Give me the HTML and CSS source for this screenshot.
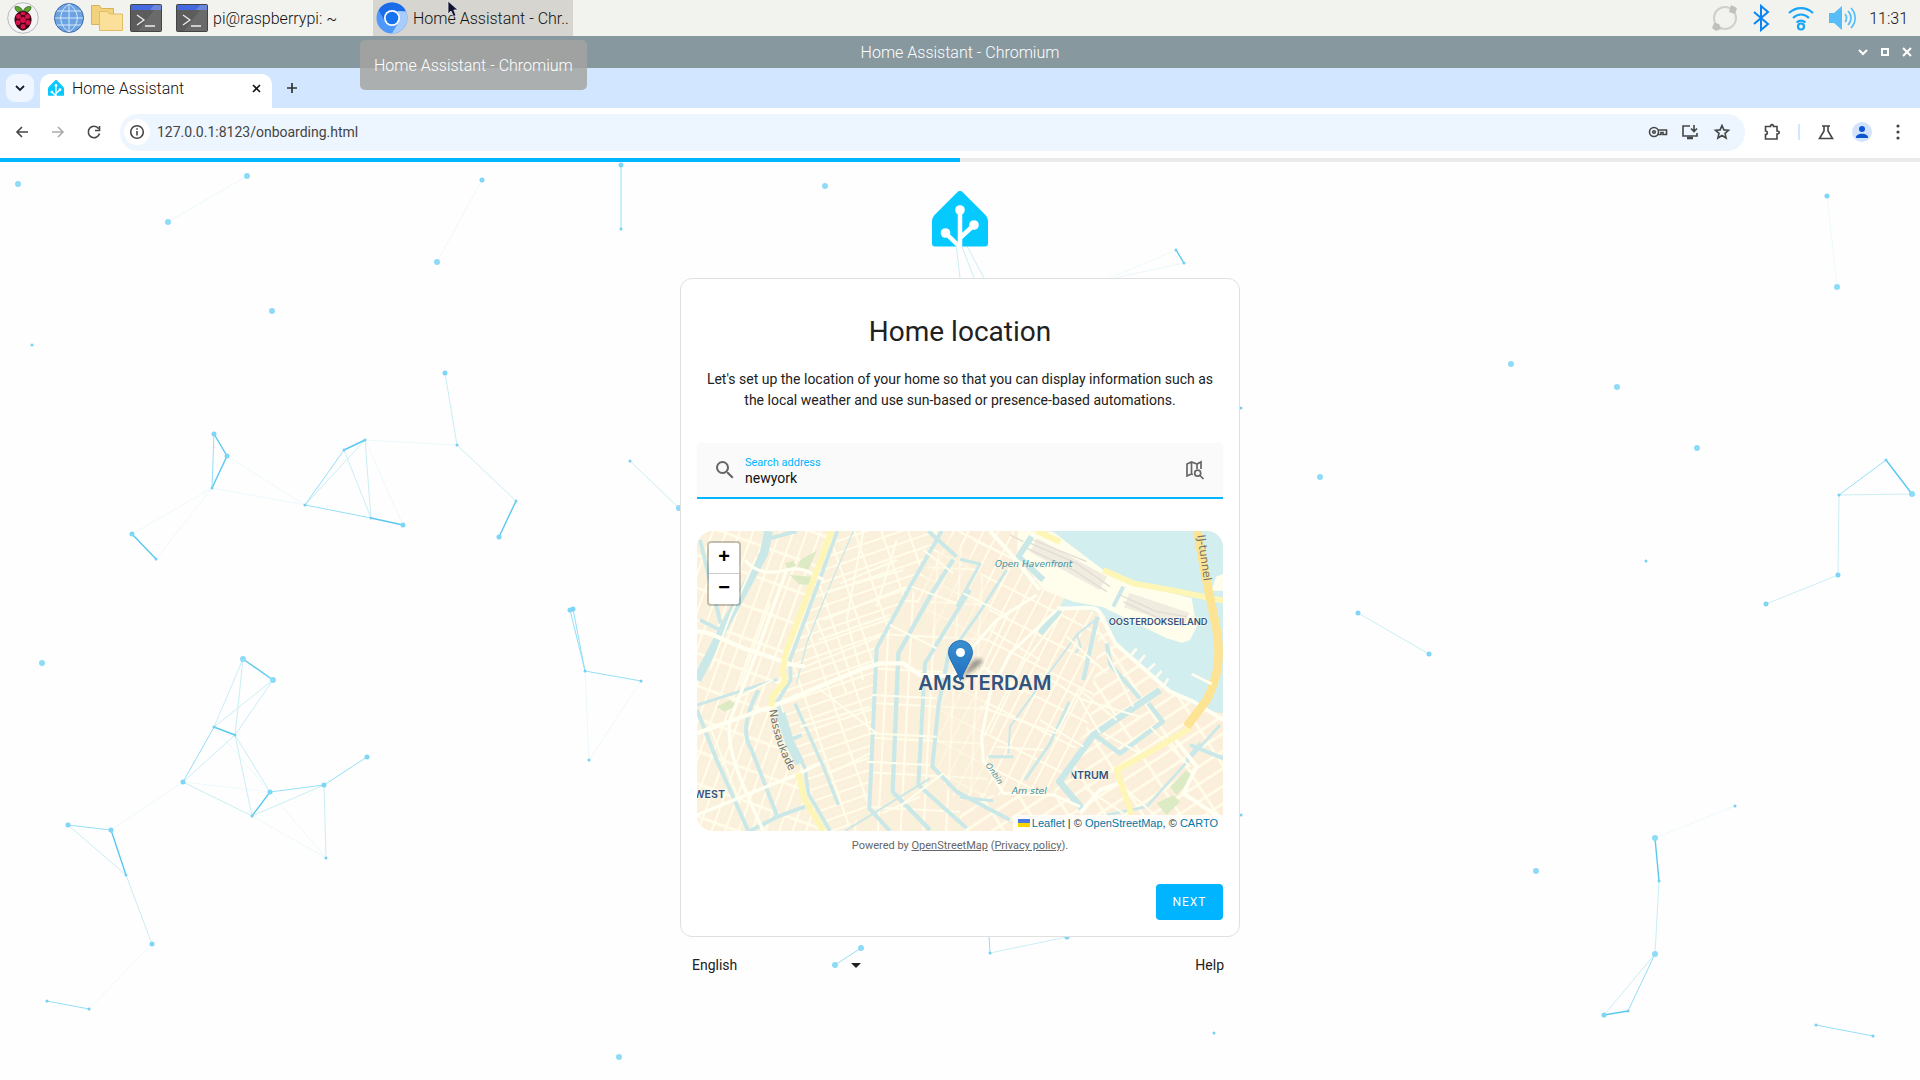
FILE: index.html
```html
<!DOCTYPE html>
<html lang="en">
<head>
<meta charset="utf-8">
<title>Home Assistant</title>
<link rel="stylesheet" href="styles.css">
</head>
<body>
<svg class="defs" width="0" height="0" aria-hidden="true">
  <symbol id="ha-logo" viewBox="0 0 56 56">
    <path fill="#06caff" d="M28 0c1 0 2 .5 2.700 1.200L53 23.500c1.900 1.900 3 4.500 3 6.500v22.500a3 3 0 0 1-3 3H3a3 3 0 0 1-3-3V30c0-2 1.100-4.600 3-6.500L25.300 1.200C26 .5 27 0 28 0z"/>
    <g fill="none" stroke="#fff" stroke-width="4.500"><path d="M28 56V19M28 56L13.500 42M28 47L42 34"/></g>
    <g fill="#fff"><circle cx="28" cy="19" r="4.800"/><circle cx="13.500" cy="42" r="4.800"/><circle cx="42" cy="34" r="4.800"/></g>
  </symbol>
  <symbol id="terminal" viewBox="0 0 32 28">
    <rect x=".5" y=".5" width="31" height="27" rx="1" fill="#5c5c5c" stroke="#444"/>
    <path d="M24 6H31V27H8z" fill="#6a6a6a"/>
    <path d="M1 1H31V6H1z" fill="#4468e0"/><path d="M24 1h7v5H20z" fill="#6d86dc"/>
    <path d="M7 11l7 5-7 5M15 22h10" fill="none" stroke="#eee" stroke-width="1.300"/>
  </symbol>
</svg>

<header class="taskbar">
  <div class="launchers">
    <button class="tb-btn" aria-label="Menu">
      <svg width="32" height="32" viewBox="0 0 32 32"><circle cx="16" cy="16" r="15.300" fill="#f4f4f6" stroke="#b9b9bd"/><path d="M15.500 9C14 4 9 4 8 5c0 4 3 6 7.500 4zM16.500 9C18 4 23 4 24 5c0 4-3 6-7.500 4z" fill="#5aa82c" stroke="#234b10" stroke-width=".7"/><path d="M16 9c5 0 9 4 8.500 9.500C24 24 20 28 16 28.500 12 28 8 24 7.500 18.500 7 13 11 9 16 9z" fill="#3c0414"/><g fill="#d3134a"><circle cx="16" cy="18" r="2.900"/><circle cx="11.500" cy="14.500" r="2.500"/><circle cx="20.500" cy="14.500" r="2.500"/><ellipse cx="16" cy="11.500" rx="2.600" ry="1.700"/><circle cx="11" cy="20.500" r="2.500"/><circle cx="21" cy="20.500" r="2.500"/><circle cx="16" cy="24.500" r="2.500"/></g></svg>
    </button>
    <button class="tb-btn" aria-label="Web browser">
      <svg width="30" height="30" viewBox="0 0 30 30"><circle cx="15" cy="15" r="14.500" fill="#6ba2e2" stroke="#3d6aa5"/><path d="M15 1v28M1 15h28M3 8h24M3 22h24M15 1C4 8 4 22 15 29M15 1c11 7 11 21 0 28" fill="none" stroke="#d7e9fb"/></svg>
    </button>
    <button class="tb-btn" aria-label="File manager">
      <svg width="32" height="26" viewBox="0 0 32 26"><path d="M.5 .5h8l2 3h12v16H.5z" fill="#f2d27c" stroke="#d9b45c"/><path d="M8.500 6.500h8l2 2.500h13v16.500h-23z" fill="#fbe09a" stroke="#e0bd66"/></svg>
    </button>
    <button class="tb-btn" aria-label="Terminal"><svg width="32" height="28"><use href="#terminal"/></svg></button>
  </div>
  <button class="task task-term"><svg width="32" height="28"><use href="#terminal"/></svg><span>pi@raspberrypi: ~</span></button>
  <button class="task task-active">
    <svg width="32" height="32" viewBox="0 0 32 32"><circle cx="16" cy="16" r="15.500" fill="#4f98fb"/><path d="M2.500 8.300A15.500 15.500 0 0 1 30 9.500L16 8.500 9 19z" fill="#1a6be8"/><path d="M30 9.500A15.500 15.500 0 0 1 16 31.500L23 19.500 22 9z" fill="#a9cdfb"/><circle cx="16" cy="16" r="8" fill="#fff"/><circle cx="16" cy="16" r="6.300" fill="#1673f0"/></svg>
    <span>Home Assistant - Chr..</span>
    <span class="tooltip" role="tooltip">Home Assistant - Chromium</span>
    <svg class="cursor" width="12" height="18" viewBox="0 0 12 18"><path d="M1 1v13l3-3 2.500 5.500 2.500-1L6.800 10H11z" fill="#101030" stroke="#e8e8ee" stroke-width=".8"/></svg>
  </button>
  <div class="tray">
    <svg width="28" height="28" viewBox="0 0 28 28"><circle cx="14" cy="14" r="11" fill="none" stroke="#cfcfcd" stroke-width="2"/><path d="M20 1l6 3-2 6-6-2zM3 19l5 1 2 5-5 2-4-3z" fill="#bfbfbd"/></svg>
    <svg class="bluetooth" width="18" height="28" viewBox="0 0 18 28"><path d="M2 8l14 12-7 6V2l7 6L2 20" fill="none" stroke="#0a84f5" stroke-width="2"/></svg>
    <svg width="28" height="28" viewBox="0 0 28 28"><g fill="none" stroke="#19a5f7" stroke-width="2.200"><path d="M2 9c7-6.500 17-6.500 24 0M6 14c5-4.500 11-4.500 16 0M9.500 18.500c3-2.500 6-2.500 9 0"/><circle cx="14" cy="22.500" r="3"/></g></svg>
    <svg width="28" height="28" viewBox="0 0 28 28"><path d="M1 9h5l8-7v24l-8-7H1z" fill="#55bdf8"/><path d="M17 10c2 2 2 6 0 8M20 7c4 4 4 10 0 14M23 4c5.500 6 5.500 14 0 20" fill="none" stroke="#55bdf8" stroke-width="1.700"/></svg>
    <time class="clock">11:31</time>
  </div>
</header>

<div class="titlebar">
  <span></span>
  <span class="window-title">Home Assistant - Chromium</span>
  <div class="window-controls">
    <button aria-label="Minimize"><svg width="10" height="10" viewBox="0 0 10 10"><path d="M1 3l4 4 4-4"/></svg></button>
    <button aria-label="Maximize"><svg width="10" height="10" viewBox="0 0 10 10"><path d="M2 2h6v6H2z"/></svg></button>
    <button aria-label="Close"><svg width="10" height="10" viewBox="0 0 10 10"><path d="M1 1l8 8M9 1L1 9"/></svg></button>
  </div>
</div>

<div class="tabstrip">
  <button class="tab-search" aria-label="Search tabs"><svg width="10" height="10" viewBox="0 0 10 10"><path d="M1 3l4 4 4-4" fill="none" stroke="#1b1b1f" stroke-width="1.800"/></svg></button>
  <div class="tab">
    <svg width="16" height="16"><use href="#ha-logo"/></svg>
    <span class="tab-title">Home Assistant</span>
    <button class="tab-close" aria-label="Close tab"><svg width="9" height="9" viewBox="0 0 9 9"><path d="M1 1l7 7M8 1L1 8" stroke="#1b1b1f" stroke-width="1.700"/></svg></button>
  </div>
  <button class="new-tab" aria-label="New tab"><svg width="12" height="12" viewBox="0 0 12 12"><path d="M6 1v10M1 6h10" stroke="#333" stroke-width="1.700"/></svg></button>
</div>

<nav class="toolbar">
  <div class="nav-buttons">
    <button aria-label="Back"><svg width="16" height="16" viewBox="0 0 16 16"><path d="M14 8H3M8 3L3 8l5 5"/></svg></button>
    <button class="disabled" aria-label="Forward"><svg width="16" height="16" viewBox="0 0 16 16"><path d="M2 8h11M8 3l5 5-5 5"/></svg></button>
    <button aria-label="Reload"><svg width="16" height="16" viewBox="0 0 16 16"><path d="M13.500 9.500A5.700 5.700 0 1 1 12.500 4.500M13.500 2v4.500H9"/></svg></button>
  </div>
  <div class="omnibox">
    <button class="site-info" aria-label="View site information"><svg width="16" height="16" viewBox="0 0 16 16"><circle cx="8" cy="8" r="6.300"/><path d="M8 7v4.500M8 4.300v1.500"/></svg></button>
    <input class="url" type="text" aria-label="Address bar" value="127.0.0.1:8123/onboarding.html">
    <div class="omnibox-actions">
      <button aria-label="Passwords"><svg width="20" height="16" viewBox="0 0 20 16"><circle cx="6" cy="8" r="4.500"/><circle cx="6" cy="8" r="1.300"/><path d="M10.500 6H18.500v4.500h-3.500V8.500h-2V10.500H10"/></svg></button>
      <button aria-label="Install"><svg width="20" height="16" viewBox="0 0 20 16"><path d="M10 2H3v10h14V9M14 1v6M11 4.500l3 3 3-3"/><path d="M7 14h6" stroke-width="2.500"/></svg></button>
      <button aria-label="Bookmark"><svg width="20" height="16" viewBox="0 0 20 16"><path d="M10 1.500l1.900 4.400 4.600.4-3.500 3.100 1.100 4.600L10 11.500 5.900 14 7 9.400 3.500 6.300l4.600-.4z"/></svg></button>
    </div>
  </div>
  <div class="toolbar-end">
    <button aria-label="Extensions"><svg width="18" height="18" viewBox="0 0 18 18"><path d="M2.500 3.500H7.500c0-2.500 3-2.500 3 0H14V8c3 0 3 3 0 3v5H2.500v-4.500c2.500 0 2.500-3.500 0-3.500z"/></svg></button>
    <span class="divider"></span>
    <button aria-label="Labs"><svg width="18" height="18" viewBox="0 0 18 18"><path d="M5 3h8M7 3v5L2.500 15.500h13L11 8V3"/></svg></button>
    <button class="profile" aria-label="Profile"><svg width="20" height="20" viewBox="0 0 20 20"><circle cx="10" cy="10" r="10" fill="#d3e3fd" stroke="none"/><circle cx="10" cy="7" r="3" fill="#0b57d0" stroke="none"/><path d="M4 15.500c0-5 12-5 12 0V16H4z" fill="#0b57d0" stroke="none"/></svg></button>
    <button aria-label="More"><svg class="dots" width="18" height="18" viewBox="0 0 18 18"><circle cx="9" cy="3" r="1.600"/><circle cx="9" cy="9" r="1.600"/><circle cx="9" cy="15" r="1.600"/></svg></button>
  </div>
</nav>

<main class="page">
  <progress class="progress" max="100" value="50" aria-label="Onboarding progress"></progress>
  <svg class="particles" viewBox="0 162 1920 918" preserveAspectRatio="xMidYMin slice" aria-hidden="true">
    <g class="line faint"><path d="M247 176L168 222M482 180L437 262M212 488L132 534M212 488L156 559M212 488L305 505M227 456L305 505M365 440L457 445M365 440L403 525M152 944L89 1009M183 782L111 830M183 782L270 792M214 727L270 792M252 816L326 858M270 792L326 858M585 671L589 760M641 681L589 760M1827 196L1837 287M1655 838L1735 806M1176 250L1105 280M1184 263L1105 280"/></g>
    <g class="line soft"><path d="M445 373L457 445L516 501M630 461L679 508M344 450L371 518M365 440L371 518M365 440L305 505M243 659L214 727M243 659L235 735M273 680L214 727M273 680L235 735M183 782L235 735L270 792M235 735L252 816M183 782L252 816L324 785M324 785L326 858M68 825L126 875M126 875L152 944M956 244L960 278M961 244L974 278M967 246L984 278M1839 495L1838 575L1766 604M1839 495L1912 494M1358 613L1429 654M1659 881L1655 954L1604 1015M990 953L1067 937"/></g>
    <g class="line"><path d="M621 165V229M214 434L212 488M344 450L305 505L371 518M183 782L214 727M570 610L585 671M573 609L585 671L641 681M270 792L324 785L367 757M68 825L111 830M47 1001L89 1009M1839 495L1886 460M1655 954L1628 1011M1816 1025L1873 1036M989 937L990 953M835 965L861 948"/></g>
    <g class="line strong"><path d="M214 434L227 456L212 488M344 450L365 440M371 518L403 525M132 534L156 559M516 501L499 537M243 659L273 680M214 727L235 735M270 792L252 816M111 830L126 875M1176 250L1184 263M1886 460L1912 494M1655 838L1659 881M1604 1015L1628 1011"/></g>
    <g class="dot dot-l"><path d="M18 184v0M247 176v0M168 222v0M437 262v0M272 311v0M42 663v0M243 659v0M273 680v0M619 1057v0M679 508v0M1837 287v0M1511 364v0M1617 387v0M1697 448v0M1320 477v0M1655 838v0M1536 871v0M825 186v0M835 965v0M861 948v0M1655 954v0M1912 494v0"/></g>
    <g class="dot dot-m"><path d="M482 180v0M621 165v0M445 373v0M214 434v0M227 456v0M132 534v0M499 537v0M403 525v0M183 782v0M270 792v0M324 785v0M367 757v0M68 825v0M111 830v0M573 609v0M570 610v0M1827 196v0M1358 613v0M1429 654v0M1766 604v0M1838 575v0M1604 1015v0M1067 937v0M152 944v0"/></g>
    <g class="dot dot-s"><path d="M32 345v0M621 229v0M457 445v0M516 501v0M630 461v0M212 488v0M344 450v0M365 440v0M305 505v0M371 518v0M156 559v0M214 727v0M235 735v0M252 816v0M326 858v0M126 875v0M47 1001v0M89 1009v0M585 671v0M641 681v0M589 760v0M1886 460v0M1839 495v0M1241 408v0M1241 815v0M1735 806v0M1659 881v0M1628 1011v0M1816 1025v0M1873 1036v0M990 953v0M1214 1033v0M1646 561v0M1176 250v0M1184 263v0"/></g>
  </svg>

  <svg class="logo" role="img" aria-label="Home Assistant" width="56" height="56"><use href="#ha-logo"/></svg>

  <section class="card">
    <h1>Home location</h1>
    <p class="intro">Let's set up the location of your home so that you can display information such as the local weather and use sun-based or presence-based automations.</p>

    <div class="search">
      <svg width="24" height="24" viewBox="0 0 24 24"><path fill="#666" d="M9.500 3A6.500 6.500 0 0 1 16 9.500c0 1.610-.59 3.090-1.560 4.230l.27.270h.79l5 5-1.500 1.500-5-5v-.79l-.27-.27A6.516 6.516 0 0 1 9.500 16a6.500 6.500 0 0 1 0-13m0 2C7 5 5 7 5 9.500S7 14 9.500 14 14 12 14 9.500 12 5 9.500 5z"/></svg>
      <div class="field">
        <label for="address">Search address</label>
        <input id="address" type="text" value="newyork">
      </div>
      <button class="map-search" aria-label="Search"><svg width="20" height="20" viewBox="0 0 20 20"><g fill="none" stroke="#666" stroke-width="1.700"><path d="M8 14.500L6.500 14 2 16V4l4.500-2L12 4l4-2v7M6.500 2v12M12 4v5"/><circle cx="12.700" cy="13.200" r="3"/><path d="M15 15.500l3.500 3.500"/></g></svg></button>
    </div>

    <div class="map">
      <svg class="map-tiles" viewBox="21 33 1578 900" preserveAspectRatio="xMidYMid slice">
        <defs>
          <pattern id="blk-a" width="38" height="92" patternUnits="userSpaceOnUse" patternTransform="rotate(20)"><rect width="38" height="92" fill="#fffeea"/><rect x="3" y="4" width="32" height="84" fill="#fcf0dc"/><rect x="12" y="12" width="13" height="66" fill="#f9f2dc"/></pattern>
          <pattern id="blk-b" width="76" height="34" patternUnits="userSpaceOnUse" patternTransform="rotate(-19)"><rect width="76" height="34" fill="#fffeea"/><rect x="3" y="3" width="70" height="28" fill="#fcf0dc"/><rect x="10" y="12" width="56" height="10" fill="#f9f2dc"/></pattern>
          <pattern id="blk-c" width="68" height="104" patternUnits="userSpaceOnUse" patternTransform="rotate(3)"><rect width="68" height="104" fill="#fffeea"/><rect x="3" y="3" width="62" height="98" fill="#fcf0dc"/><rect x="24" y="10" width="18" height="84" fill="#f8f2da"/></pattern>
          <pattern id="blk-d" width="40" height="84" patternUnits="userSpaceOnUse" patternTransform="rotate(27)"><rect width="40" height="84" fill="#fffeea"/><rect x="3" y="3" width="34" height="78" fill="#fceedb"/><rect x="12" y="14" width="14" height="54" fill="#f9f1dc"/></pattern>
          <pattern id="blk-e" width="94" height="44" patternUnits="userSpaceOnUse" patternTransform="rotate(-33)"><rect width="94" height="44" fill="#fffeea"/><rect x="4" y="4" width="86" height="36" fill="#fceedb"/><rect x="14" y="16" width="64" height="10" fill="#f9f1dc"/></pattern>
          <clipPath id="centrum"><path d="M1145 740h200v60h-200z"/></clipPath>
        </defs>
        <path fill="url(#blk-a)" d="M21 33H440L280 450 340 740 420 933H21z"/>
        <path fill="url(#blk-b)" d="M425 33H755L560 385 540 860 470 933H410L330 740 260 540 290 440z"/>
        <path fill="url(#blk-c)" d="M755 33H830L800 300 760 740 820 860V933H460L540 860 560 385z"/>
        <path fill="url(#blk-d)" d="M755 33H1080L1290 270 1200 600 1090 840 810 860 730 740 770 380 660 200z"/>
        <path fill="url(#blk-c)" d="M700 160L790 40 900 200 880 700 900 820 800 820 727 740z" opacity=".6"/>
        <path fill="url(#blk-e)" d="M1230 290L1600 590V933H810V830L1090 820 1200 600z"/>
        <path fill="#d3eeee" d="M1085 33H1600V580L1540 570 1440 515 1290 390 1240 280 1150 262 1110 260 1130 225 1070 180z"/>
        <path fill="#fffdec" d="M985 33L1090 36 1240 150 1330 190 1505 235 1520 320 1500 360 1475 368 1430 355 1240 262 1150 245 1060 210 980 100zM1578 170l21-8v50h-35z"/>
        <path d="M1030 75L1240 190M1310 240L1490 300" fill="none" stroke="#f1ece0" stroke-width="46"/>
        <g fill="none" stroke="#e2dcd4" stroke-width="4"><path d="M1010 65L1160 130 1260 200M1005 82L1150 150 1250 215M1290 225L1400 275 1490 290M1300 245L1400 292 1480 305M1030 60L1190 125M960 45l40 20"/></g>
        <g fill="#dcebc4"><path d="M380 92L355 150 320 150 330 120zM300 165l65 5-8 25-30-2zM285 130l25-8 8 15-25 10zM80 560l40-20 20 15-35 20z"/><path d="M1440 800l50-50 20 20-50 55zM1400 850l50-25 20 20-40 40z"/></g>
        <g class="canal">
          <path stroke-width="26" d="M236 33L222 100 100 325 21 480"/><path stroke-width="12" d="M240 55L320 33M30 60L92 310M30 300L100 335"/>
          <path stroke-width="9" d="M21 555L262 478"/>
          <path stroke-width="11" d="M442 33L385 190 300 420 302 480 262 545 290 640 345 745 355 820 420 933"/>
          <path stroke-width="28" d="M272 580L300 670 330 730"/><path stroke-width="12" d="M300 660L335 645"/>
          <path stroke-width="4" d="M490 33L410 220 350 370 320 490"/><path stroke-width="10" d="M315 550L400 740 445 855"/>
          <path stroke-width="12" d="M21 570L80 720 175 933M205 510C160 600 160 650 185 690L262 890 345 860M180 933L262 890"/>
          <path stroke-width="12" d="M755 33L660 200 560 385 538 865 600 933"/>
          <path stroke-width="13" d="M790 118L725 220 625 400 608 815 720 930"/>
          <path stroke-width="12" d="M840 210L705 430 685 795 830 925M715 33L800 110"/>
          <path stroke-width="12" d="M780 380L745 560 727 740 800 815 960 900"/>
          <path stroke-width="6" d="M465 933L720 775"/>
          <path stroke-width="9" d="M810 118L870 132 800 260M950 150L860 290 780 400"/>
          <path stroke-width="18" d="M1025 50L985 110 1060 180M1050 340L1110 270"/>
          <path stroke-width="13" d="M1222 290L1180 480M1250 370L1262 435 1350 535"/>
          <path stroke-width="20" d="M1410 510L1210 645 1108 785 1180 870"/>
          <path stroke-width="14" d="M1215 645L1290 700 1418 605 1375 550"/>
          <path stroke-width="6" d="M1215 300L1160 345 1120 400 1010 550 960 620 955 700M1160 340L1172 380 1155 400"/>
          <path stroke-width="9" d="M1138 545L1080 670 1005 780M895 710H970M810 832L910 842"/>
          <path stroke-width="8" d="M1250 885L1370 860 1460 760 1590 615"/><path stroke-width="12" d="M1500 675L1600 715M1532 670L1490 720M1300 200L1270 260"/>
        </g>
        <g class="minor">
          <path d="M200 110L120 290 60 450M240 250L150 500M330 200L250 420M60 620L150 850M250 480L130 540M410 215L640 150M385 360L600 285M345 440L570 350M400 300L650 200M380 500L560 640M330 620L540 560M420 760L540 700M545 525L740 535M540 640L740 650M530 725L720 735M600 315L740 385M665 200L800 250M700 90L790 160M575 880L690 830M640 850L760 760M520 33L470 300 520 480M620 60L560 260M380 300L470 520M620 120L450 190"/>
          <path d="M850 60L1000 130M820 220L940 280M900 330L1050 420M850 420L1000 520M870 560L1100 640M1050 460L1180 540 1350 590M1170 500L1100 640M1160 520L1230 640M1170 510L1280 600M1050 600L1180 680M920 680L1060 690M1240 640L1350 700M1100 300L1000 430 900 640M960 270L860 480M1250 400L1330 560M1310 810L1400 890M1180 800L1300 880M1380 620L1500 740M1130 350L1250 460"/>
        </g>
        <g class="road">
          <path stroke-width="13" d="M21 335C60 330 120 375 200 398S300 440 345 438"/>
          <path stroke-width="13" d="M21 640L130 600 250 558 340 520 520 445 570 430 640 430 690 465 810 470"/>
          <path stroke-width="10" d="M165 120C200 165 250 160 290 150S350 150 400 180M290 150L200 398 120 600C105 680 150 780 220 933M21 885L180 820 330 760 390 730"/>
          <path stroke-width="9" d="M1040 225L920 300 850 380 800 460M1100 270L960 400 900 520 875 650 880 720 940 820 1090 825 1170 860"/>
          <path stroke-width="12" d="M1100 265C1150 270 1220 250 1230 280L1275 370 1440 515 1510 545 1600 600M900 33L970 110 1050 210M1450 650L1520 740 1480 820 1600 900M1170 880L1230 810 1285 790"/>
        </g>
        <g fill="none" stroke="#fdf6b6" stroke-width="18" stroke-linejoin="round">
          <path d="M425 33L370 180 290 390 278 450 285 485 245 530 245 560M325 760L345 840 400 933"/>
          <path d="M1040 33L1110 65M1240 150L1330 190 1450 212 1600 242"/>
          <path d="M1500 625L1390 690 1280 750 1300 810 1325 885"/>
        </g>
        <path d="M1522 33L1545 160 1580 330C1595 420 1580 480 1550 540L1490 620" fill="none" stroke="#fde494" stroke-width="26"/>
        <path d="M1320 410l20-25M1345 430l20-25M1370 455l25-25M1395 475l20-22M1420 500l15-25M1505 462l60 30" fill="none" stroke="#fffdf0" stroke-width="8"/>
        <g class="place">
          <text x="685" y="509" font-size="61">AMSTERDAM</text>
          <text x="1256" y="315" font-size="28">OOSTERDOKSEILAND</text>
          <text x="105" y="834" font-size="32" text-anchor="end">WEST</text>
          <text x="1256" y="776" font-size="32" text-anchor="end" clip-path="url(#centrum)">CENTRUM</text>
        </g>
        <path id="nassau" d="M238 570C250 650 270 700 310 775" fill="none"/>
        <g class="street"><text font-size="32"><textPath href="#nassau">Nassaukade</textPath></text><text font-size="34" transform="translate(1522 46) rotate(82)">IJ-tunnel</text></g>
        <g class="water-name"><text x="915" y="142" font-size="27">Open Havenfront</text><text x="965" y="823" font-size="28">Am stel</text><text font-size="24" transform="translate(886 736) rotate(55)">Onbin</text></g>
      </svg>
      <svg class="pin" width="46" height="42" viewBox="0 0 46 42" role="img" aria-label="Home">
        <defs><linearGradient id="pin-fill" x1="0" y1="0" x2="0" y2="1"><stop offset="0" stop-color="#3a8fd0"/><stop offset="1" stop-color="#1f6fc0"/></linearGradient><filter id="soft"><feGaussianBlur stdDeviation="2"/></filter></defs>
        <path d="M12 40L24 22c6-6 14-3 8 3z" fill="#000" opacity=".4" filter="url(#soft)"/>
        <path d="M12.500.5a12 12 0 0 1 12 12c0 6-5 11-12 28C5.500 23.500.5 18.500.5 12.500a12 12 0 0 1 12-12z" fill="url(#pin-fill)" stroke="#2a6db0"/><circle cx="12.500" cy="12.500" r="4.500" fill="#fff"/>
      </svg>
      <div class="zoom"><button aria-label="Zoom in">+</button><button aria-label="Zoom out">−</button></div>
      <div class="attribution"><svg width="12" height="8" viewBox="0 0 12 8"><path fill="#4c7be1" d="M0 0h12v4H0z"/><path fill="#ffd500" d="M0 4h12v4H0z"/></svg><a href="#">Leaflet</a> | © <a href="#">OpenStreetMap</a>, © <a href="#">CARTO</a></div>
    </div>
    <p class="powered">Powered by <a href="#">OpenStreetMap</a> (<a href="#">Privacy policy</a>).</p>
    <div class="actions"><button class="next">NEXT</button></div>
  </section>

  <footer class="footer">
    <div class="language">
      <select aria-label="Language"><option>English</option></select>
      <svg width="10" height="5" viewBox="0 0 10 5"><path d="M0 0h10L5 5z" fill="#212121"/></svg>
    </div>
    <a href="#">Help</a>
  </footer>
</main>
</body>
</html>
```
FILE: styles.css
```css
* { box-sizing: border-box; }

body {
  margin: 0;
  min-height: 100vh;
  display: flex;
  flex-direction: column;
  font-family: Roboto, "Liberation Sans", sans-serif;
  color: #212121;
  background: #fff;
}

button {
  display: flex;
  align-items: center;
  justify-content: center;
  padding: 0;
  border: 0;
  background: none;
  font: inherit;
  color: inherit;
}

svg { display: block; flex: none; }
.defs { position: absolute; }

/* Desktop panel */
.taskbar {
  display: flex;
  align-items: center;
  height: 36px;
  padding: 0 12px 0 7px;
  background: #f2f2ee;
  font-size: 16px;
  font-weight: 300;
  color: #111;
}
.launchers { display: flex; align-items: center; gap: 7px; }
.tb-btn:first-child { margin-right: 8px; }
.task {
  display: flex;
  justify-content: flex-start;
  gap: 5px;
  width: 200px;
  height: 36px;
  padding: 0 3px;
  white-space: nowrap;
}
.task-term { margin-left: 11px; }
.task-active { position: relative; background: #d6d5cf; }
.tooltip {
  position: absolute;
  top: 40px;
  left: -13px;
  display: flex;
  align-items: center;
  height: 50px;
  padding: 0 14px;
  border-radius: 5px;
  background: rgba(163, 164, 161, .84);
  color: #fff;
  z-index: 5;
}
.cursor { position: absolute; left: 74px; top: 0; }
.tray { display: flex; align-items: center; gap: 13px; margin-left: auto; }
.bluetooth { margin-right: 4px; }

/* Window title */
.titlebar {
  display: grid;
  grid-template-columns: 1fr auto 1fr;
  align-items: center;
  height: 32px;
  padding: 0 8px;
  background: #87989f;
  color: #fff;
  font-size: 16px;
  font-weight: 300;
}
.window-controls { display: flex; gap: 12px; justify-self: end; }
.window-controls path { fill: none; stroke: #fff; stroke-width: 2; }

/* Browser tabs */
.tabstrip {
  display: flex;
  align-items: flex-end;
  height: 40px;
  padding-left: 6px;
  background: #d3e6ff;
}
.tab-search {
  width: 28px;
  height: 28px;
  margin: 0 6px 6px 0;
  border-radius: 9px;
  background: #eff6ff;
}
.tab {
  display: flex;
  align-items: center;
  gap: 8px;
  width: 232px;
  height: 34px;
  padding: 0 11px 6px 8px;
  border-radius: 10px 10px 0 0;
  background: #fff;
}
.tab-title { flex: 1; font-size: 16px; font-weight: 300; color: #111; }
.new-tab { width: 28px; height: 28px; margin: 0 0 6px 6px; }

/* Browser toolbar */
.toolbar {
  display: flex;
  align-items: center;
  height: 50px;
  padding: 0 13px 2px 14px;
  background: #fff;
}
.toolbar svg { fill: none; stroke: #444746; stroke-width: 1.6px; }
.toolbar .dots { fill: #444746; stroke: none; }
.nav-buttons { display: flex; gap: 20px; margin-right: 18px; }
.nav-buttons .disabled { opacity: .45; }
.omnibox {
  flex: 1;
  display: flex;
  align-items: center;
  height: 37px;
  padding: 0 13px 0 4px;
  border-radius: 18px;
  background: #edf5fe;
}
.site-info { width: 26px; height: 26px; border-radius: 50%; background: #fff; }
.url {
  flex: 1;
  height: 28px;
  margin-left: 7px;
  padding: 0;
  border: 0;
  background: none;
  font: 14px Roboto, sans-serif;
  color: #444;
}
.omnibox-actions { display: flex; gap: 12px; }
.toolbar-end { display: flex; align-items: center; gap: 17px; margin-left: 18px; }
.divider { width: 2px; height: 16px; background: #d3e6ff; }

/* Onboarding page */
.page {
  position: relative;
  flex: 1;
  display: flex;
  flex-direction: column;
  align-items: center;
  background: #fefefe;
}
.progress {
  appearance: none;
  display: block;
  width: 100%;
  height: 4px;
  border: 0;
  background: #ebebeb;
}
.progress::-webkit-progress-bar { background: #ebebeb; }
.progress::-webkit-progress-value { background: #00b7ff; }
.particles { position: absolute; left: 0; top: 4px; width: 100%; height: calc(100% - 4px); }
.line { fill: none; stroke: #94dff8; stroke-width: 1; }
.line.faint { stroke: #ecf9fc; }
.line.soft { stroke: #caeef5; }
.line.strong { stroke: #5ac8ef; stroke-width: 1.400; }
.dot { fill: none; stroke-linecap: round; }
.dot-l { stroke: #8edbf8; stroke-width: 6; }
.dot-m { stroke: #7ed5f6; stroke-width: 5; }
.dot-s { stroke: #74d0f3; stroke-width: 3; }
.logo { position: relative; margin: 29px 0 31px; }

.card {
  position: relative;
  width: 560px;
  max-width: 100%;
  padding: 33px 16px 16px;
  border: 1px solid #e0e0e0;
  border-radius: 12px;
  background: #fff;
}
h1 { margin: 0 0 17px; font-size: 28px; font-weight: 400; line-height: 40px; text-align: center; }
.intro { margin: 0 0 32px; font-size: 14px; line-height: 21px; text-align: center; }
.search {
  display: flex;
  align-items: center;
  gap: 8px;
  height: 56px;
  padding: 0 18px 0 16px;
  border-bottom: 2px solid #00b4ff;
  border-radius: 4px 4px 0 0;
  background: #fafafa;
}
.field { flex: 1; display: flex; flex-direction: column; padding-top: 3px; }
.field label { font-size: 11px; line-height: 13px; color: #00b4ff; }
.field input {
  width: 100%;
  height: 18px;
  padding: 0;
  border: 0;
  background: none;
  font: 14px/18px Roboto, sans-serif;
  color: #111;
}

.map {
  position: relative;
  height: 300px;
  margin-top: 32px;
  overflow: hidden;
  border-radius: 16px;
  background: #fdf3dc;
}
.map-tiles { width: 100%; height: 100%; }
.canal { fill: none; stroke: #cbe8e8; stroke-linejoin: round; }
.minor { fill: none; stroke: #fffeec; stroke-width: 6; }
.road { fill: none; stroke: #fffff2; stroke-linejoin: round; }
.place { font-family: Inter, sans-serif; font-weight: 600; fill: #34547d; stroke: #fffdf3; stroke-width: 3px; paint-order: stroke; }
.street { font-family: "DejaVu Sans", sans-serif; fill: #6f746c; }
.water-name { font-family: "DejaVu Sans", sans-serif; font-style: italic; fill: #3f93a4; }
.pin { position: absolute; left: calc(50% - 12px); top: calc(50% - 41px); }
.zoom {
  position: absolute;
  left: 10px;
  top: 10px;
  width: 34px;
  border: 2px solid rgba(0, 0, 0, .22);
  border-radius: 4px;
  background: #fff;
  background-clip: padding-box;
}
.zoom button { width: 30px; height: 30px; padding-bottom: 4px; font: bold 20px "Liberation Sans", sans-serif; color: #000; }
.zoom button + button { border-top: 1px solid #ccc; height: 31px; }
.attribution {
  position: absolute;
  right: 0;
  bottom: 0;
  padding: 0 5px;
  background: rgba(255, 255, 255, .8);
  font: 11px/16px "Liberation Sans", sans-serif;
  color: #333;
}
.attribution svg { display: inline; margin-right: 2px; }
.attribution a { color: #0078a8; text-decoration: none; }

.powered { margin: 7px 0 30px; font-size: 11px; line-height: 16px; text-align: center; color: #666; }
.powered a { color: inherit; }
.actions { display: flex; justify-content: flex-end; }
.next {
  width: 67px;
  height: 36px;
  border-radius: 4px;
  background: #00b4ff;
  color: #fff;
  font-size: 12px;
  letter-spacing: 1px;
}

.footer {
  position: relative;
  display: flex;
  align-items: center;
  justify-content: space-between;
  width: 560px;
  max-width: 100%;
  height: 56px;
  padding: 0 16px 0 12px;
  font-size: 14px;
}
.language { display: flex; align-items: center; width: 169px; }
.language select { flex: 1; appearance: none; padding: 0; border: 0; background: none; font: inherit; color: inherit; }
.footer a { color: inherit; text-decoration: none; }
```
